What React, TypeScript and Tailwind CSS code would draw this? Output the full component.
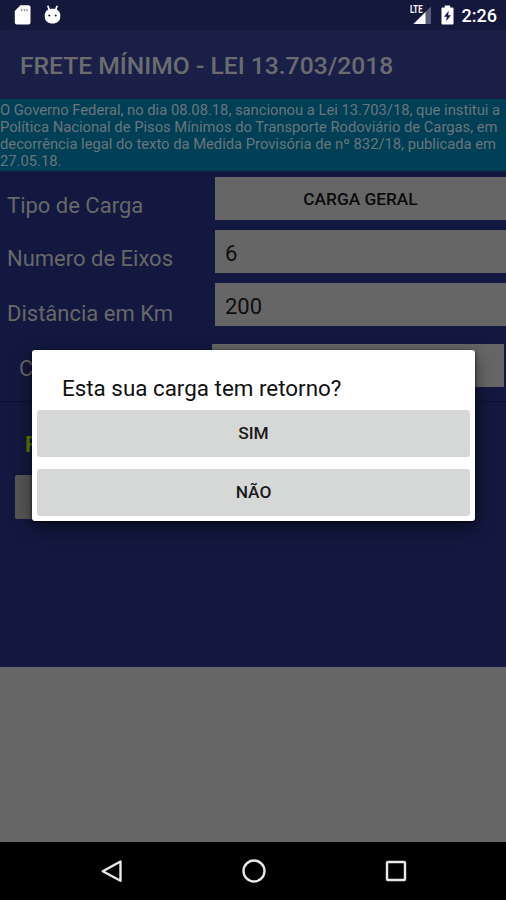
interface FieldRowProps {
  label: string
  value: string
  button?: boolean
}

const fields: FieldRowProps[] = [
  { label: "Tipo de Carga", value: "CARGA GERAL", button: true },
  { label: "Numero de Eixos", value: "6" },
  { label: "Distância em Km", value: "200" },
]

const options = ["SIM", "NÃO"]

function StatusBar() {
  return (
    <div className="flex h-[30px] shrink-0 items-center bg-[#14183c] text-white">
      {/* SD card */}
      <svg className="ml-[14px] h-[20px] w-[17px]" viewBox="0 0 17 20" fill="currentColor">
        <path d="M6.3 .3H14.5Q16.5 .3 16.5 2.3V17.5Q16.5 19.5 14.5 19.5H2.8Q.8 19.5 .8 17.5V6Z" />
        <path d="M7.5 4V6.3M10.3 4V6.3M13 4V6.3" stroke="#8a8ca0" strokeWidth="1.3" />
      </svg>
      {/* Android debug */}
      <svg className="ml-[13px] h-[20px] w-[17px]" viewBox="0 0 17 20" fill="currentColor">
        <path d="M.8 9H16.2V12C16.2 16 13 18.5 8.5 18.5S.8 16 .8 12Z" />
        <path d="M.8 10.5C.8 6 3.5 3.7 8.5 3.7S16.2 6 16.2 10.5Z" />
        <path d="M3.8 .8L5.4 5M13.2 .8L11.6 5" stroke="currentColor" strokeWidth="1.8" />
        <circle cx="5.3" cy="10.5" r="1" fill="#14183c" />
        <circle cx="11.7" cy="10.5" r="1" fill="#14183c" />
      </svg>
      <div className="flex-1" />
      {/* Signal */}
      <div className="relative h-[20px] w-[23px]">
        <svg className="absolute inset-0 h-[20px] w-[23px]" viewBox="0 0 23 20">
          <path d="M22 1.5V19H4.5Z" fill="#5b5e79" />
          <path d="M16.5 7V19H4.5Z" fill="#fff" />
        </svg>
        <span className="absolute top-[1px] left-[1px] origin-left scale-x-[0.74] bg-[#14183c] text-[10.5px] leading-[8px] font-bold">
          LTE
        </span>
      </div>
      {/* Battery */}
      <svg className="ml-[9px] h-[20px] w-[13px]" viewBox="0 0 13 20">
        <path d="M3.8 .5H9.2V2.5H11.5Q12.5 2.5 12.5 3.5V18.5Q12.5 19.5 11.5 19.5H1.5Q.5 19.5 .5 18.5V3.5Q.5 2.5 1.5 2.5H3.8Z" fill="#fff" />
        <path d="M7.8 5.8L3 11.8H5.8L5.2 16.3L10 10.2H7.2Z" fill="#14183c" />
      </svg>
      <span className="mr-[9px] ml-[8px] pt-[2px] text-[18px] leading-none font-medium">2:26</span>
    </div>
  )
}

function FieldRow({ label, value, button }: FieldRowProps) {
  return (
    <div className="group flex h-[43px] items-end">
      <span className="w-[215px] shrink-0 pb-[3px] pl-[7px] text-[22px] leading-none whitespace-nowrap text-[#686868] group-last:pb-px">
        {label}
      </span>
      {button ? (
        <div className="flex h-full flex-1 items-center justify-center bg-[#666] pt-[2px] text-[17.3px] font-medium text-[#0a0a0a]">
          {value}
        </div>
      ) : (
        <div className="flex h-full flex-1 items-center bg-[#666] pt-[3px] pl-[10px] text-[22px] text-[#0e0e0e]">
          {value}
        </div>
      )}
    </div>
  )
}

function ReturnDialog() {
  return (
    <div className="absolute top-[350px] left-[32px] h-[171px] w-[443px] rounded-[3px] bg-white px-[5px] shadow-[0_6px_18px_rgba(0,0,0,0.5),0_1px_3px_rgba(0,0,0,0.8)]">
      <h2 className="flex h-[60px] items-center pt-[17px] pl-[25px] text-[22.4px] whitespace-nowrap text-[#111]">
        Esta sua carga tem retorno?
      </h2>
      <div className="flex flex-col gap-[12px]">
        {options.map((option) => (
          <button
            key={option}
            className="h-[47px] rounded-[3px] bg-[#d6d7d7] text-[17.3px] font-medium text-[#1a1a1a]"
          >
            {option}
          </button>
        ))}
      </div>
    </div>
  )
}

function NavigationBar() {
  return (
    <div className="flex h-[58px] shrink-0 items-center justify-between bg-black pr-[98px] pl-[100px] text-[#e8e8e8]">
      <svg className="h-[26px] w-[24px]" viewBox="0 0 24 26" fill="none" stroke="currentColor" strokeWidth="2.4">
        <path d="M20.5 3.5V22.8L2.8 13.2Z" strokeLinejoin="round" />
      </svg>
      <svg className="h-[26px] w-[26px]" viewBox="0 0 26 26" fill="none" stroke="currentColor" strokeWidth="2.4">
        <circle cx="13" cy="13" r="10.5" />
      </svg>
      <svg className="h-[24px] w-[24px]" viewBox="0 0 24 24" fill="none" stroke="currentColor" strokeWidth="2.4">
        <rect x="3" y="3" width="18" height="18" rx="0.8" />
      </svg>
    </div>
  )
}

export default function App() {
  return (
    <div className="relative flex h-[900px] w-[506px] flex-col overflow-hidden bg-[#666] font-[Roboto,sans-serif]">
      <StatusBar />
      <header className="flex h-[69px] shrink-0 items-center bg-[#1a1f48] pt-[3px] pl-[20px]">
        <h1 className="text-[24.65px] font-medium whitespace-nowrap text-[#6b6c70]">
          FRETE MÍNIMO - LEI 13.703/2018
        </h1>
      </header>

      <p className="h-[72px] shrink-0 bg-[#004056] pt-[3px] text-[14.75px] leading-[17.1px] whitespace-nowrap text-[#6b757b]">
        O Governo Federal, no dia 08.08.18, sancionou a Lei 13.703/18, que institui a
        <br />
        Política Nacional de Pisos Mínimos do Transporte Rodoviário de Cargas, em
        <br />
        decorrência legal do texto da Medida Provisória de nº 832/18, publicada em
        <br />
        27.05.18.
      </p>

      <main className="h-[496px] shrink-0 bg-[#12183f] pt-[6px]">
        <div className="flex flex-col gap-[10px]">
          {fields.map((field) => (
            <FieldRow key={field.label} {...field} />
          ))}
        </div>
        <div className="mt-[18px] flex h-[58px] border-b border-[#0c1130]">
          <span className="w-[212px] pt-[12px] pl-[19px] text-[22px] leading-[26px] text-[#666]">C</span>
          <div className="h-[43px] w-[292px] bg-[#666]" />
        </div>
        <div className="flex h-[73px] items-center pt-[12px] pl-[25px] text-[22px] font-bold text-[#5c7a06]">F</div>
        <div className="ml-[15px] h-[44px] w-[180px] rounded-[2px] bg-[#565656]" />
      </main>

      <div className="flex-1 bg-[#666]" />
      <NavigationBar />
      <ReturnDialog />
    </div>
  )
}
